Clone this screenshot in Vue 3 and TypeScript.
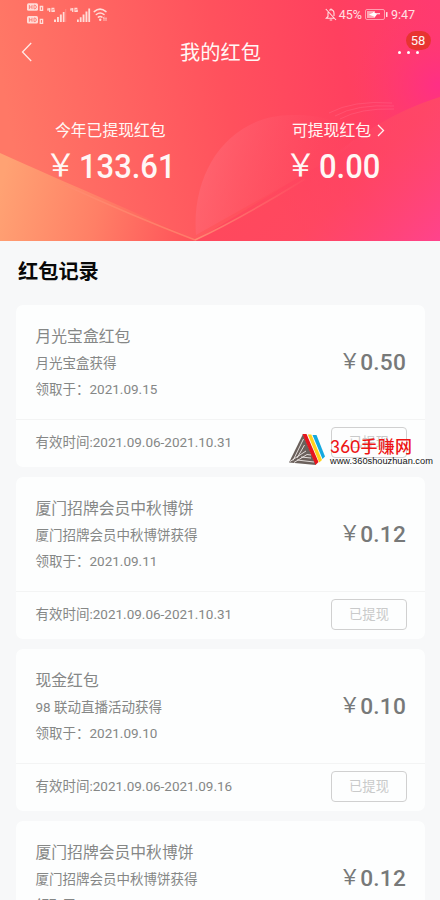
<script setup lang="ts">
interface RedPacket {
  title: string
  source: string
  received: string
  validity: string
  amount: string
}

const records: RedPacket[] = [
  { title: '月光宝盒红包', source: '月光宝盒获得', received: '2021.09.15', validity: '2021.09.06-2021.10.31', amount: '0.50' },
  { title: '厦门招牌会员中秋博饼', source: '厦门招牌会员中秋博饼获得', received: '2021.09.11', validity: '2021.09.06-2021.10.31', amount: '0.12' },
  { title: '现金红包', source: '98 联动直播活动获得', received: '2021.09.10', validity: '2021.09.06-2021.09.16', amount: '0.10' },
  { title: '厦门招牌会员中秋博饼', source: '厦门招牌会员中秋博饼获得', received: '2021.09.11', validity: '2021.09.06-2021.10.31', amount: '0.12' },
]
</script>

<template>
  <div class="page">
    <header class="hero">
      <svg class="hero-art" viewBox="0 0 440 241" preserveAspectRatio="none" aria-hidden="true">
        <defs>
          <linearGradient id="base" gradientUnits="userSpaceOnUse" x1="0" y1="70" x2="430" y2="0">
            <stop offset="0" stop-color="#ff7866" />
            <stop offset="0.5" stop-color="#ff515d" />
            <stop offset="0.78" stop-color="#ff405f" />
            <stop offset="1" stop-color="#ff3a70" />
          </linearGradient>
          <radialGradient id="pink" gradientUnits="userSpaceOnUse" cx="438" cy="85" r="85">
            <stop offset="0" stop-color="#ff2f85" />
            <stop offset="1" stop-color="#ff3d68" stop-opacity="0" />
          </radialGradient>
          <linearGradient id="left" gradientUnits="userSpaceOnUse" x1="0" y1="190" x2="195" y2="235">
            <stop offset="0" stop-color="#ffa273" />
            <stop offset="0.5" stop-color="#ff7f66" />
            <stop offset="1" stop-color="#ff5059" />
          </linearGradient>
          <linearGradient id="right" gradientUnits="userSpaceOnUse" x1="290" y1="120" x2="430" y2="260">
            <stop offset="0" stop-color="#ff4260" stop-opacity="0" />
            <stop offset="0.45" stop-color="#ff4664" stop-opacity=".6" />
            <stop offset="1" stop-color="#ff4390" />
          </linearGradient>
          <linearGradient id="wing" gradientUnits="userSpaceOnUse" x1="440" y1="98" x2="270" y2="190">
            <stop offset="0" stop-color="#ff476f" />
            <stop offset="0.6" stop-color="#ff4260" />
            <stop offset="1" stop-color="#ff4a5c" />
          </linearGradient>
          <linearGradient id="petal" gradientUnits="userSpaceOnUse" x1="205" y1="145" x2="310" y2="180">
            <stop offset="0" stop-color="#ff7180" stop-opacity="0.5" />
            <stop offset="1" stop-color="#ff5068" stop-opacity="0.1" />
          </linearGradient>
          <linearGradient id="ray" gradientUnits="userSpaceOnUse" x1="195" y1="240" x2="305" y2="180">
            <stop offset="0" stop-color="#ff8a73" />
            <stop offset="1" stop-color="#ff7070" stop-opacity="0.1" />
          </linearGradient>
        </defs>
        <rect width="440" height="241" fill="url(#base)" />
        <rect width="440" height="241" fill="url(#pink)" />
        <path d="M440 97C405 108 370 126 330 158L195 241H440Z" fill="url(#wing)" />
        <path d="M440 97C405 108 370 126 330 158L195 241H440Z" fill="url(#right)" />
        <path d="M196 235C191 170 230 115 292 115C325 114 347 124 354 139C356 147 325 162 294 180Z" fill="url(#petal)" />
        <path d="M0 153C75 187 132 210 195 240V241H0Z" fill="url(#left)" />
        <path d="M65 185Q130 215 195 240" fill="none" stroke="#ff8b70" stroke-width="1.5" opacity="0.7" />
        <path d="M195 240Q240 219 305 179" fill="none" stroke="url(#ray)" stroke-width="1.5" />
        <path d="M329 113Q353 100 392 103M335 116Q356 104 394 106M340 119Q360 108 394 109" fill="none" stroke="#ff7d9c" stroke-width=".7" opacity=".4" />
      </svg>

      <div class="status">
        <svg class="signals" width="84" height="24" viewBox="0 0 84 24" fill="#ffdcd7" aria-hidden="true">
          <rect x="0" y="0.2" width="11" height="7.6" rx="1.5" />
          <rect x="0" y="13" width="11" height="7.6" rx="1.5" />
          <path d="M2.4 2V6M5 2V6M2.4 4H5M7 2.2H8L9.2 3V5L8 5.8H7ZM2.4 14.8V18.8M5 14.8V18.8M2.4 16.8H5M7 15H8L9.2 15.8V17.8L8 18.6H7Z" fill="none" stroke="#ff7168" stroke-width=".8" />
          <path d="M13.3 3.5H15.6V7.4H13.3ZM13.3 16.4H15.6V20.3H13.3Z" fill="none" stroke="#ffdcd7" stroke-width="1.3" />
          <path d="M21.3 5L20.8 7H23.4M22.7 5V9M27.4 5.4H25V8.4H27.2V7H26M44.3 5L43.8 7H46.4M45.7 5V9M50.4 5.4H48V8.4H50.2V7H49" fill="none" stroke="#ffdcd7" stroke-width="1.2" />
          <path d="M27 16.5H29V19H27ZM30 14H31.9V19H30ZM32.9 11.5H34.8V19H32.9ZM35.8 9H37.5V19H35.8Z" />
          <path d="M38.3 6H39.2V19H38.3Z" opacity=".3" />
          <path d="M50 16.5H51.8V19H50ZM52.8 14.3H54.6V19H52.8ZM55.6 11.5H57.5V19H55.6ZM58.5 8.5H60.4V19H58.5ZM61.3 5.5H63.1V19H61.3Z" />
          <g fill="none" stroke="#ffdcd7" stroke-width="1.5" stroke-linecap="round">
            <path d="M67.2 8.6Q73 3.6 79 8.6M69.3 11.5Q73.2 8.4 77 11.5M71.3 14.1Q73.2 12.7 75 14.1" />
          </g>
          <circle cx="73.2" cy="16.7" r="1.2" />
          <path d="M76 15.2H80M76 15.2L77.4 14M76 17H80" stroke="#ffdcd7" stroke-width=".8" />
        </svg>
        <div class="status-right">
          <svg width="12" height="13" viewBox="0 0 12 13" fill="none" stroke="#ffe0e3" stroke-width="1.1" aria-hidden="true">
            <path d="M.8 1L11 12M3 4.2V8.5L1.3 10.3H9M4.3 2.4Q6 1 7.7 2.3Q9 3.2 9 5V8M4.7 12H7.2M6 .4V1.8" />
          </svg>
          <span class="battery-label">45%</span>
          <svg class="battery" width="23" height="11" viewBox="0 0 23 11" aria-hidden="true">
            <rect x=".5" y=".5" width="19" height="10" rx="1.5" fill="none" stroke="#ff9fb0" />
            <rect x="2" y="2" width="8" height="7" fill="#ffa4b2" />
            <path d="M4 5.6L8 3.8V2.9L11 4.2H15V5.3H12L10 8L7.5 7Z" fill="#fff" />
            <rect x="21" y="3" width="1.5" height="5" rx=".5" fill="#ffe0e3" />
          </svg>
          <span>9:47</span>
        </div>
      </div>

      <nav class="navbar">
        <svg class="back" width="12" height="20" viewBox="0 0 12 20" fill="none" stroke="#ffe9e6" stroke-width="1.3" aria-hidden="true">
          <path d="M10.2 1L1.5 10L10.2 19" />
        </svg>
        <h1>我的红包</h1>
        <div class="more">
          <i></i><i></i><i></i>
          <span class="badge">58</span>
        </div>
      </nav>

      <div class="totals">
        <div class="total">
          <div class="total-label">今年已提现红包</div>
          <div class="total-value"><span class="yen">￥</span><span class="num">133.61</span></div>
        </div>
        <div class="total">
          <div class="total-label">
            可提现红包
            <svg width="8" height="13" viewBox="0 0 8 13" fill="none" stroke="#fff0f0" stroke-width="1.3" aria-hidden="true"><path d="M1 1L6.5 6.5L1 12" /></svg>
          </div>
          <div class="total-value second"><span class="yen">￥</span><span class="num">0.00</span></div>
        </div>
      </div>
    </header>

    <main class="content">
      <h2>红包记录</h2>
      <article v-for="(item, index) in records" :key="index" class="card">
        <div class="card-main">
          <div class="info">
            <h3>{{ item.title }}</h3>
            <p class="source">{{ item.source }}</p>
            <p class="received">领取于：{{ item.received }}</p>
          </div>
          <div class="amount"><span class="yen">￥</span><span class="num">{{ item.amount }}</span></div>
        </div>
        <div class="card-foot">
          <span class="validity">有效时间:{{ item.validity }}</span>
          <button type="button">已提现</button>
        </div>
      </article>
    </main>

    <div class="site-mark">
      <svg width="36" height="32" viewBox="0 0 36 32" aria-hidden="true">
        <path d="M14 0L0 28.5L27 31Z" fill="#6b615c" />
        <path d="M14.5 5L4 26.5M15.5 11L8 24M1 27.5L17 17M5 28.5L18 20.5L22 21M8 26L25 28M12 23L22 24" fill="none" stroke="#eee9e6" stroke-width=".9" />
        <path d="M13.5 0H17.5L29.5 28L26.5 31Z" fill="#e6151e" />
        <path d="M18.8 .5H22.3L33 26L30.2 28.5Z" fill="#ffd21c" />
        <path d="M23.5 1H27.5L36 22.5L33.5 25Z" fill="#14a9df" />
      </svg>
      <div class="mark-copy">
        <strong>360手赚网</strong>
        <span>www.360shouzhuan.com</span>
      </div>
    </div>
  </div>
</template>

<style>
body {
  overflow: hidden;
}
</style>

<style scoped>
.page {
  position: relative;
  width: 440px;
  height: 900px;
  overflow: hidden;
  background: #f7f8f9;
  font-family: Roboto, "Noto Sans CJK SC", sans-serif;
  color: #858786;
}
h1, h2, h3, p {
  margin: 0;
  font-weight: 400;
}
svg {
  display: block;
  flex: none;
}
.hero {
  position: relative;
  height: 241px;
  color: #fff7f5;
}
.hero-art {
  position: absolute;
  inset: 0;
  width: 100%;
  height: 100%;
}
.status {
  position: relative;
  display: flex;
  justify-content: space-between;
  height: 28px;
  box-sizing: border-box;
  padding: 3px 25px 0 27px;
}
.status-right {
  display: flex;
  align-items: center;
  height: 22px;
  font-size: 12.5px;
  color: #ffe0e3;
}
.battery-label {
  margin: 0 3px 0 2px;
}
.battery {
  margin-right: 3px;
}
.navbar {
  position: relative;
  display: grid;
  grid-template-columns: 60px 1fr 60px;
  align-items: center;
  height: 48px;
}
.back {
  margin-left: 21px;
}
h1 {
  padding: 2px 0 0 1px;
  text-align: center;
  font-size: 20.2px;
  line-height: 28px;
}
.more {
  position: relative;
  display: flex;
  gap: 6px;
  margin-left: 17.5px;
}
.more i {
  width: 3px;
  height: 3px;
  border-radius: 50%;
  background: #fff;
}
.badge {
  position: absolute;
  left: 8px;
  top: -20px;
  width: 25px;
  height: 19px;
  border-radius: 10px;
  background: #e83431;
  font-size: 13px;
  line-height: 19px;
  text-align: center;
}
.totals {
  position: relative;
  display: grid;
  grid-template-columns: 220px 220px;
  padding-top: 42px;
}
.total {
  padding-left: 55px;
}
.total + .total {
  padding-left: 72px;
}
.total-label {
  display: flex;
  align-items: center;
  gap: 6px;
  padding-top: 1px;
  font-size: 15.8px;
  line-height: 23px;
}
.total-value {
  display: flex;
  align-items: center;
  height: 48px;
  margin-left: -10px;
}
.total-value .yen {
  width: 34px;
  font-size: 31px;
  line-height: 40px;
}
.total-value .num {
  font-size: 34px;
  font-weight: 500;
  line-height: 40px;
  transform: scaleX(.91);
  transform-origin: left center;
}
.total-value.second {
  margin-left: -7px;
}
.content {
  padding: 17px 15px 0 16px;
}
h2 {
  margin: 0 0 18px 2px;
  color: #080808;
  font-size: 20.2px;
  font-weight: 700;
  line-height: 29px;
}
.card {
  height: 162px;
  margin-bottom: 10px;
  border-radius: 7px;
  background: #fdfefe;
}
.card-main {
  display: flex;
  justify-content: space-between;
  height: 114px;
  box-sizing: border-box;
  padding: 19px 19px 0 19.5px;
}
h3 {
  font-size: 15.8px;
  line-height: 26px;
}
.source, .received {
  font-size: 13.5px;
}
.source {
  line-height: 27px;
}
.received {
  line-height: 24px;
}
.amount {
  display: flex;
  align-items: center;
  height: 28px;
  margin-top: 24px;
  color: #777979;
}
.amount .yen {
  width: 21px;
  font-size: 21px;
  line-height: 26px;
  margin-top: -2px;
}
.amount .num {
  font-size: 22.7px;
  font-weight: 500;
  letter-spacing: .2px;
}
.card-foot {
  display: flex;
  align-items: center;
  justify-content: space-between;
  height: 48px;
  box-sizing: border-box;
  padding: 0 18px 4px 19.5px;
  border-top: 1px solid #f3f4f4;
}
.validity {
  margin-top: -2px;
  font-size: 13.5px;
}
button {
  width: 76px;
  height: 31px;
  box-sizing: border-box;
  margin-top: 1px;
  padding: 0;
  border: 1px solid #d0d0d0;
  border-radius: 4px;
  background: transparent;
  color: #c9caca;
  font: 13.3px/29px Roboto, "Noto Sans CJK SC", sans-serif;
}
.site-mark {
  position: absolute;
  left: 289px;
  top: 434px;
  display: flex;
  gap: 5px;
}
.mark-copy {
  display: flex;
  flex-direction: column;
  padding-top: 3px;
}
.mark-copy strong {
  color: #ee1515;
  font: 500 17px/20px Lato, "Noto Sans CJK SC", sans-serif;
  letter-spacing: .3px;
  white-space: nowrap;
}
.mark-copy span {
  color: #151515;
  font: 9.25px/8px "Liberation Sans", sans-serif;
}
</style>
